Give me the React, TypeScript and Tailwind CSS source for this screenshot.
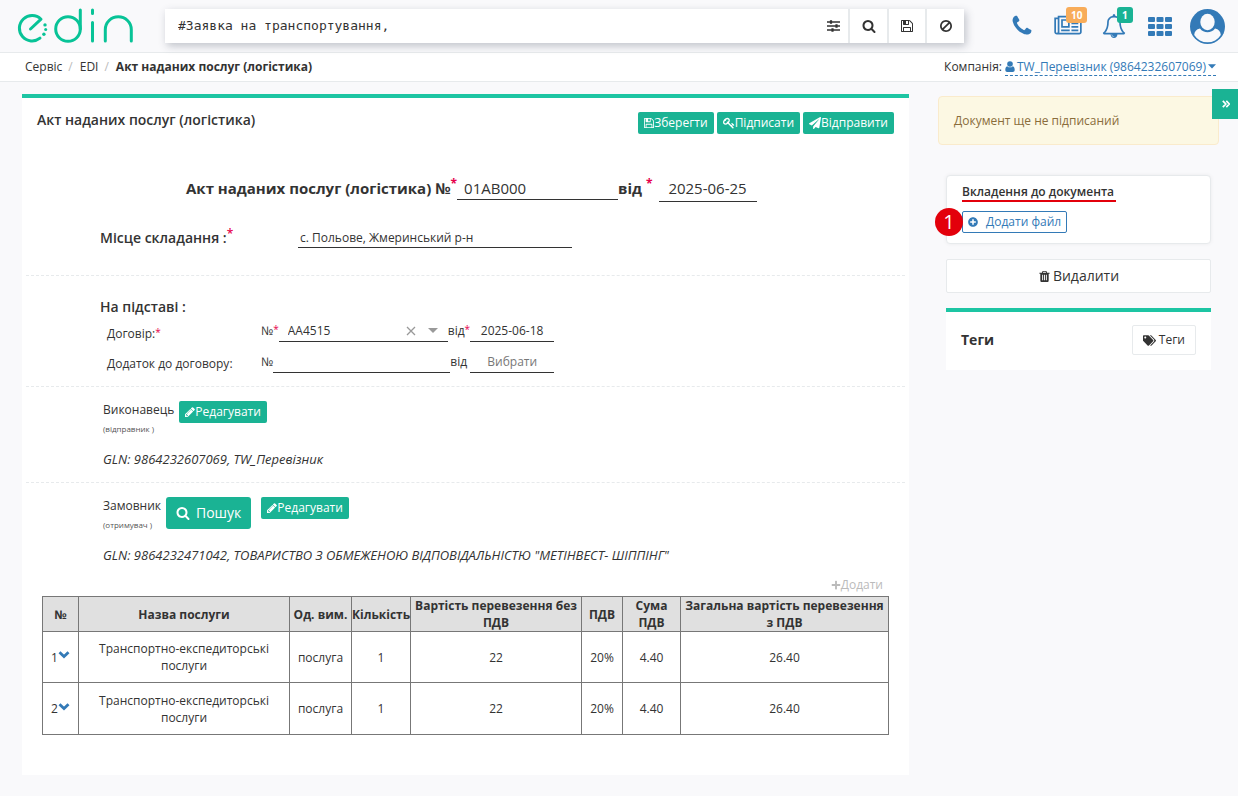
import React from "react";
import { FaPaperPlane, FaPlus, FaPlusCircle, FaTags } from "react-icons/fa";

type GlyphProps = { d: string; box?: string; className?: string };

function Glyph({ d, box = "0 0 1792 1792", className = "" }: GlyphProps) {
  return (
    <svg viewBox={box} className={className} fill="currentColor" aria-hidden="true">
      <path d={d} />
    </svg>
  );
}

const PHONE =
  "M1600 1240q0 27-10 70.5t-21 68.5q-21 50-122 106-94 51-186 51-27 0-52.5-3.5t-57.5-12.5-47.5-14.5-55.5-20.5-49-18q-98-35-175-83-128-79-264.5-215.5t-215.5-264.5q-48-77-83-175-3-9-18-49t-20.5-55.5-14.5-47.5-12.5-57.5-3.5-52.5q0-92 51-186 56-101 106-122 25-11 68.5-21t70.5-10q14 0 21 3 18 6 53 76 11 19 30 54t35 63.500 31 53.500q3 4 17.500 25t21.500 35.500 7 28.500q0 20-28.500 50t-62 55-62 53-28.500 46q0 9 5 22.500t8.500 20.500 14 24 11.500 19q76 137 174 235t235 174q2 1 19 11.500t24 14 20.500 8.500 22.500 5q18 0 46-28.500t53-62 55-62 50-28.500q14 0 28.500 7t35.500 21.500 25 17.500q25 15 53.500 31t63.500 35 54 30q70 35 76 53 3 7 3 21z";
const NEWS =
  "M1024 512h-384v384h384v-384zm128 640v128h-640v-128h640zm0-768v640h-640v-640h640zm640 768v128h-512v-128h512zm0-256v128h-512v-128h512zm0-256v128h-512v-128h512zm0-256v128h-512v-128h512zm-1536 960v-960h-128v960q0 26 19 45t45 19 45-19 19-45zm1664 0v-1088h-1536v1088q0 33-11 64h1483q26 0 45-19t19-45zm128-1216v1216q0 80-56 136t-136 56h-1664q-80 0-136-56t-56-136v-1088h256v-128h1792z";
const BELL =
  "M912 1696q0-16-16-16-59 0-101.5-42.5t-42.5-101.5q0-16-16-16t-16 16q0 73 51.5 124.5t124.5 51.5q16 0 16-16zm-666-288h1300q-266-300-266-832 0-51-24-105t-69-103-121.5-80.5-169.5-31.5-169.5 31.5-121.5 80.5-69 103-24 105q0 532-266 832zm1482 0q0 52-38 90t-90 38h-448q0 106-75 181t-181 75-181-75-75-181h-448q-52 0-90-38t-38-90q50-42 91-88t85-119.5 74.5-158.5 50-206 19.5-260q0-152 117-282.5t307-158.5q-8-19-8-39 0-40 28-68t68-28 68 28 28 68q0 20-8 39 190 28 307 158.5t117 282.5q0 139 19.5 260t50 206 74.5 158.5 85 119.5 91 88z";
const SAVE =
  "M512 1536h768v-384h-768v384zm896 0h128v-896q0-14-10-38.5t-20-34.5l-281-281q-10-10-34-20t-39-10v416q0 40-28 68t-68 28h-576q-40 0-68-28t-28-68v-416h-128v1280h128v-416q0-40 28-68t68-28h832q40 0 68 28t28 68v416zm-384-928v-320q0-13-9.5-22.5t-22.5-9.5h-192q-13 0-22.5 9.5t-9.5 22.5v320q0 13 9.5 22.5t22.5 9.5h192q13 0 22.5-9.5t9.5-22.5zm640 32v928q0 40-28 68t-68 28h-1344q-40 0-68-28t-28-68v-1344q0-40 28-68t68-28h928q40 0 88 20t76 48l280 280q28 28 48 76t20 88z";
const SEARCH =
  "M1216 832q0-185-131.5-316.5t-316.5-131.5-316.5 131.5-131.5 316.5 131.5 316.5 316.5 131.5 316.5-131.5 131.5-316.5zm512 832q0 52-38 90t-90 38q-54 0-90-38l-343-342q-179 124-399 124-143 0-273.5-55.5t-225-150-150-225-55.5-273.5 55.5-273.5 150-225 225-150 273.5-55.5 273.5 55.5 225 150 150 225 55.5 273.5q0 220-124 399l343 343q37 37 37 90z";
const BAN =
  "M1440 893q0-161-87-295l-754 753q137 89 297 89 111 0 211.5-43.5t173.5-116.5 116-174.5 43-212.5zm-999 299l755-754q-135-91-300-91-148 0-273 73t-198 199-73 274q0 162 89 299zm1223-299q0 157-61 300t-163.5 246-245 164-298.5 61-298.5-61-245-164-163.5-246-61-300 61-299.5 163.5-245.5 245-164 298.5-61 298.5 61 245 164 163.5 245.5 61 299.5z";
const TRASH =
  "M704 1376v-704q0-14-9-23t-23-9h-64q-14 0-23 9t-9 23v704q0 14 9 23t23 9h64q14 0 23-9t9-23zm256 0v-704q0-14-9-23t-23-9h-64q-14 0-23 9t-9 23v704q0 14 9 23t23 9h64q14 0 23-9t9-23zm256 0v-704q0-14-9-23t-23-9h-64q-14 0-23 9t-9 23v704q0 14 9 23t23 9h64q14 0 23-9t9-23zm-544-992h448l-48-117q-7-9-17-11h-317q-10 2-17 11zm928 32v64q0 14-9 23t-23 9h-96v948q0 83-47 143.5t-113 60.5h-832q-66 0-113-58.5t-47-141.5v-952h-96q-14 0-23-9t-9-23v-64q0-14 9-23t23-9h309l70-167q15-37 54-63t79-26h320q40 0 79 26t54 63l70 167h309q14 0 23 9t9 23z";
const KEY =
  "M832 512q0-80-56-136t-136-56-136 56-56 136q0 42 19 83-41-19-83-19-80 0-136 56t-56 136 56 136 136 56 136-56 56-136q0-42-19-83 41 19 83 19 80 0 136-56t56-136zm851 704q0 17-49 66t-66 49q-9 0-28.500-16t-36.500-33-38.500-40-24.500-26l-96 96 220 220q28 28 28 68 0 42-39 81t-81 39q-40 0-68-28l-671-671q-176 131-365 131-163 0-265.500-102.500t-102.500-265.500q0-160 95-313t248-248 313-95q163 0 265.500 102.500t102.500 265.500q0 189-131 365l355 355 96-96q-3-3-26-24.500t-40-38.500-33-36.500-16-28.500q0-17 49-66t66-49q13 0 23 10 6 6 46 44.500t82 79.500 86.500 86 73 78 28.500 41z";
const PENCIL =
  "M491 1536l91-91-235-235-91 91v107h128v128h107zm523-928q0-22-22-22-10 0-17 7l-542 542q-7 7-7 17 0 22 22 22 10 0 17-7l542-542q7-7 7-17zm-54-192l416 416-832 832h-416v-416zm683 96q0 53-37 90l-166 166-416-416 166-165q36-38 90-38 53 0 91 38l235 234q37 39 37 91z";

function Logo() {
  return (
    <svg viewBox="0 0 118 36" className="h-9 w-[118px]" fill="none" stroke="#08c397" strokeWidth="3" strokeLinecap="round" strokeLinejoin="round" role="img" aria-label="edin">
      <path d="M14.500 21 25 11.200A12.700 12.700 0 1 0 24 30.200" />
      <circle cx="52" cy="21" r="12.300" />
      <path d="M64.300 2v19M76.500 14.500v18.500M76.500 2v3.500M89.300 33V21.500a13 12.800 0 0 1 26 0V33" />
      <g fill="#08c397" stroke="none">
        <circle cx="29" cy="16.900" r="1.700" />
        <circle cx="29.700" cy="21.600" r="1.500" />
        <circle cx="27.900" cy="26.200" r="1.700" />
      </g>
    </svg>
  );
}

function Star({ small = false }: { small?: boolean }) {
  return <span className={small ? "self-start text-[10px] leading-3 text-[#e6004c]" : "self-start text-xs leading-3 text-[#e6004c]"}>*</span>;
}

const miniButton = "flex h-[22px] items-center rounded-[2px] bg-[#1ab394] px-[6px] text-xs font-medium text-white";
const lineInput = "border-b border-[#333] bg-transparent outline-none placeholder:text-[#777]";

function EditButton() {
  return (
    <button type="button" className={miniButton}>
      <Glyph d={PENCIL} box="128 128 1536 1536" className="size-[10px]" />
      Редагувати
    </button>
  );
}

const rows = [
  { n: 1, name: "Транспортно-експедиторські послуги", unit: "послуга", qty: "1", net: "22", vat: "20%", vatSum: "4.40", total: "26.40" },
  { n: 2, name: "Транспортно-експедиторські послуги", unit: "послуга", qty: "1", net: "22", vat: "20%", vatSum: "4.40", total: "26.40" },
];

function Header() {
  return (
    <header className="flex h-[53px] items-center border-b border-[#e7eaec] pr-[13px] pl-4">
      <a href="#home" className="mr-[31px]">
        <Logo />
      </a>
      <form className="flex h-[34px] flex-1 items-stretch bg-white shadow-[2px_3px_8px_rgba(60,70,90,0.3)]">
        <input aria-label="Пошук документів" defaultValue="#Заявка на транспортування," className="min-w-0 flex-1 bg-transparent px-[13px] font-['DejaVu_Sans_Mono','Liberation_Mono',monospace] text-[13px] text-[#333] outline-none" />
        <button type="button" aria-label="Фільтри" className="flex w-[30px] items-center justify-center">
          <svg viewBox="0 0 13 12" className="h-3 w-[13px]" fill="none" stroke="currentColor" strokeWidth="1.300" aria-hidden="true">
            <path d="M0 2h13M0 6h13M0 10h13" />
            <path d="M4 .3v3.400M9.500 4.300v3.400M5.500 8.300v3.400" strokeWidth="2.200" />
          </svg>
        </button>
        <button type="button" aria-label="Шукати" className="flex w-[39px] items-center justify-center border-l-2 border-[#e7eaec]">
          <Glyph d={SEARCH} className="size-[14px]" />
        </button>
        <button type="button" aria-label="Зберегти пошук" className="flex w-[38px] items-center justify-center border-l-2 border-[#e7eaec]">
          <Glyph d={SAVE} className="size-[14px]" />
        </button>
        <button type="button" aria-label="Очистити" className="flex w-[39px] items-center justify-center border-l-2 border-[#e7eaec]">
          <Glyph d={BAN} className="size-[14px]" />
        </button>
      </form>
      <nav className="ml-[46px] flex items-center text-[#337ab7]">
        <a href="#phone" aria-label="Телефон" className="mr-5">
          <Glyph d={PHONE} className="size-6" />
        </a>
        <a href="#news" aria-label="Новини" className="relative mr-5">
          <Glyph d={NEWS} box="0 0 2048 1792" className="h-6 w-7" />
          <span className="absolute -top-[7px] left-3 rounded-[3px] bg-[#f8ac59] px-[5px] text-[10px] leading-4 font-bold text-white">10</span>
        </a>
        <a href="#alerts" aria-label="Сповіщення" className="relative mr-[22px]">
          <Glyph d={BELL} className="size-6" />
          <span className="absolute -top-[7px] left-[15px] rounded-[3px] bg-[#1ab394] px-[5px] text-[10px] leading-4 font-bold text-white">1</span>
        </a>
        <a href="#apps" aria-label="Сервіси" className="mr-[18px]">
          <svg viewBox="0 0 24 19" className="h-[19px] w-6" fill="currentColor" aria-hidden="true">
            {[0, 7, 14].map((y) => [0, 8.5, 17].map((x) => <rect key={`${x}-${y}`} x={x} y={y} width="7" height="5" rx="1" />))}
          </svg>
        </a>
        <a href="#profile" aria-label="Профіль">
          <svg viewBox="0 0 35 35" className="size-[35px]" aria-hidden="true">
            <circle cx="17.500" cy="17.500" r="17.500" fill="currentColor" />
            <ellipse cx="17.500" cy="13" rx="7.200" ry="8.200" fill="#f9f9fb" />
            <path d="M10 19.500C6.300 20.300 4.500 22.500 4.200 26a15.700 15.700 0 0 0 26.600 0c-.3-3.500-2.100-5.700-5.800-6.500-3.500 5-11.500 5-15 0Z" fill="#f9f9fb" />
          </svg>
        </a>
      </nav>
    </header>
  );
}

export default function App() {
  return (
    <div className="min-h-screen bg-[#f9f9fb] font-['Open_Sans','Noto_Sans',sans-serif] text-xs text-[#333]">
      <Header />
      <div className="flex h-[29px] items-center justify-between border-b border-[#e7eaec] bg-white pr-[22px] pl-[25px]">
        <nav className="flex items-center" aria-label="Навігація">
          <a href="#service">Сервіс</a>
          <span className="px-[6px] text-[#bbb]">/</span>
          <a href="#edi" className="pl-px">EDI</a>
          <span className="px-[6px] text-[#bbb]">/</span>
          <strong className="pl-px font-bold">Акт наданих послуг (логістика)</strong>
        </nav>
        <div className="flex items-center gap-[3px]">
          <span>Компанія:</span>
          <button type="button" className="flex items-center gap-[2px] border-b border-dashed border-[#337ab7] text-[#337ab7]">
            <svg viewBox="0 0 10 11" className="h-[11px] w-[10px]" fill="currentColor" aria-hidden="true">
              <circle cx="5" cy="3" r="2.800" />
              <path d="M2.300 5.200a3.700 3.700 0 0 0 5.400 0C9.400 5.500 9.700 7.500 9.700 9c0 1.200-.8 2-1.900 2H2.200C1.100 11 .3 10.200.3 9c0-1.500.3-3.500 2-3.800Z" />
            </svg>
            TW_Перевізник (9864232607069)
            <svg viewBox="0 0 8 5" className="h-[5px] w-2" fill="currentColor" aria-hidden="true">
              <path d="M0 .3h8L4 4.500z" />
            </svg>
          </button>
        </div>
      </div>

      <div className="flex items-start pt-3 pl-[22px]">
        <main className="min-w-0 flex-1 border-t-4 border-[#1dc5a3] bg-white px-1 pb-10">
          <div className="flex items-start justify-between px-[11px] pt-[14px]">
            <h1 className="text-sm leading-4 font-semibold">Акт наданих послуг (логістика)</h1>
            <div className="flex gap-[3px]">
              <button type="button" className={miniButton}>
                <Glyph d={SAVE} box="128 128 1536 1536" className="size-[10px]" />
                Зберегти
              </button>
              <button type="button" className={miniButton}>
                <Glyph d={KEY} className="size-3" />
                Підписати
              </button>
              <button type="button" className={miniButton}>
                <FaPaperPlane className="size-3" />
                Відправити
              </button>
            </div>
          </div>

          <div className="mt-[41px] flex h-[26px] items-center pl-[160px] text-[15px]">
            <label htmlFor="act-number" className="flex font-bold">
              Акт наданих послуг (логістика) №
              <Star />
            </label>
            <input id="act-number" defaultValue="01AB000" className={`${lineInput} h-6 w-[161px] px-[7px]`} />
            <label htmlFor="act-date" className="flex font-bold">
              від&nbsp;
              <Star />
            </label>
            <input id="act-date" defaultValue="2025-06-25" className={`${lineInput} ml-[6px] h-7 w-[98px] text-center`} />
          </div>

          <div className="mt-[27px] flex h-5 items-center pl-[74px]">
            <label htmlFor="place" className="flex w-[198px] text-sm font-semibold">
              Місце складання :<Star />
            </label>
            <input id="place" defaultValue="с. Польове, Жмеринський р-н" className={`${lineInput} h-5 w-[274px] px-[2px]`} />
          </div>

          <section className="mt-[27px] border-t border-dashed border-[#e7eaec] pt-[21px] pl-[74px]">
            <h2 className="text-sm font-semibold">На підставі :</h2>
            <div className="mt-[3px] flex h-[22px] items-center pl-[7px]">
              <span className="flex w-[154px] pt-[6px]">
                Договір:
                <Star small />
              </span>
              <label htmlFor="contract" className="flex">
                №<Star small />
              </label>
              <div className="flex h-[22px] w-[169px] items-center border-b border-[#333]">
                <input id="contract" defaultValue="АА4515" className="min-w-0 flex-1 bg-transparent pl-[9px] outline-none" />
                <button type="button" aria-label="Очистити договір" className="mr-3 text-[#999]">
                  <svg viewBox="0 0 10 10" className="size-[10px]" fill="none" stroke="currentColor" strokeWidth="1.300" aria-hidden="true">
                    <path d="m1 1 8 8M9 1 1 9" />
                  </svg>
                </button>
                <button type="button" aria-label="Вибрати договір" className="mr-[10px] text-[#999]">
                  <svg viewBox="0 0 10 5" className="h-[5px] w-[10px]" fill="currentColor" aria-hidden="true">
                    <path d="M0 0h10L5 5z" />
                  </svg>
                </button>
              </div>
              <label htmlFor="contract-date" className="flex">
                від
                <Star small />
              </label>
              <input id="contract-date" defaultValue="2025-06-18" className={`${lineInput} h-[22px] w-[84px] text-center`} />
            </div>
            <div className="mt-[9px] flex h-[22px] items-center pl-[7px]">
              <span className="w-[154px] pt-1">Додаток до договору:</span>
              <label htmlFor="annex">№</label>
              <input id="annex" className={`${lineInput} h-[22px] w-[177px]`} />
              <label htmlFor="annex-date" className="w-5">
                від
              </label>
              <input id="annex-date" placeholder="Вибрати" className={`${lineInput} h-[22px] w-[84px] text-center`} />
            </div>
          </section>

          <section className="mt-[13px] border-t border-dashed border-[#e7eaec] pt-[14px] pb-[14px] pl-[77px]">
            <div className="flex h-[37px] items-start gap-[5px]">
              <div>
                <div className="leading-[18px]">Виконавець</div>
                <div className="mt-1 text-[8px] leading-3 text-[#555]">(відправник )</div>
              </div>
              <EditButton />
            </div>
            <p className="mt-[13px] text-[13px] leading-[17px] italic">GLN: 9864232607069, TW_Перевізник</p>
          </section>

          <section className="border-t border-dashed border-[#e7eaec] pt-[14px] pl-[77px]">
            <div className="flex h-[37px] items-start gap-[5px]">
              <div>
                <div className="leading-[18px]">Замовник</div>
                <div className="mt-1 text-[8px] leading-3 text-[#555]">(отримувач )</div>
              </div>
              <button type="button" className="mr-[5px] flex h-8 items-center gap-[6px] rounded-[3px] bg-[#1ab394] px-[10px] text-sm text-white">
                <Glyph d={SEARCH} className="size-[14px]" />
                Пошук
              </button>
              <EditButton />
            </div>
            <p className="mt-[13px] text-[13px] leading-[17px] italic">GLN: 9864232471042, ТОВАРИСТВО З ОБМЕЖЕНОЮ ВІДПОВІДАЛЬНІСТЮ "МЕТІНВЕСТ- ШІППІНГ"</p>
          </section>

          <div className="mt-3 pr-4 pl-4">
            <div className="flex justify-end pr-[6px]">
              <button type="button" className="flex h-[18px] items-center text-[#bbb]">
                <FaPlus className="size-[10px]" />
                Додати
              </button>
            </div>
            <table className="mt-[2px] w-full table-fixed border-collapse text-center [&_td]:border [&_td]:border-[#777] [&_th]:border [&_th]:border-[#777]">
              <colgroup>
                <col className="w-9" />
                <col />
                <col className="w-[62px]" />
                <col className="w-[59px]" />
                <col className="w-[171px]" />
                <col className="w-[41px]" />
                <col className="w-[58px]" />
                <col className="w-[208px]" />
              </colgroup>
              <thead className="bg-[#e0e0e0]">
                <tr className="h-[35px] leading-[17px]">
                  <th>№</th>
                  <th>Назва послуги</th>
                  <th>Од. вим.</th>
                  <th className="whitespace-nowrap">Кількість</th>
                  <th>Вартість перевезення без ПДВ</th>
                  <th>ПДВ</th>
                  <th>Сума ПДВ</th>
                  <th>Загальна вартість перевезення з ПДВ</th>
                </tr>
              </thead>
              <tbody>
                {rows.map((r) => (
                  <tr key={r.n} className="h-[51px] leading-[17px] last:h-[52px]">
                    <td>
                      <span className="flex items-center justify-center">
                        {r.n}
                        <button type="button" aria-label={`Розгорнути рядок ${r.n}`} className="pb-1 text-[#337ab7]">
                          <svg viewBox="0 0 12 8" className="h-2 w-3" fill="none" stroke="currentColor" strokeWidth="2.800" aria-hidden="true">
                            <path d="m1.500 1.300 4.500 4.200 4.500-4.200" />
                          </svg>
                        </button>
                      </span>
                    </td>
                    <td className="px-4">{r.name}</td>
                    <td>{r.unit}</td>
                    <td>{r.qty}</td>
                    <td>{r.net}</td>
                    <td>{r.vat}</td>
                    <td>{r.vatSum}</td>
                    <td>{r.total}</td>
                  </tr>
                ))}
              </tbody>
            </table>
          </div>
        </main>

        <aside className="relative w-[329px] shrink-0 pr-[19px] pl-[29px]">
          <button type="button" aria-label="Згорнути панель" className="absolute -top-[5px] right-0 flex h-[30px] w-[26px] items-center justify-center bg-[#1ab394] pl-[2px] text-white">
            <svg viewBox="0 0 8 8" className="size-2" fill="none" stroke="currentColor" strokeWidth="1.700" aria-hidden="true">
              <path d="m.8.8 3 3.200-3 3.200M4.300.8l3 3.200-3 3.200" />
            </svg>
          </button>
          <div className="mt-[2px] rounded-[4px] border border-[#faebcc] bg-[#fcf8e3] px-[15px] pt-[15px] pb-[14px] leading-[18px] text-[#8a6d3b]">Документ ще не підписаний</div>
          <div className="mt-[30px] px-2">
            <section className="relative rounded-[4px] border border-[#e7eaec] bg-white px-[15px] pt-2 pb-[10px] shadow-[0_0_4px_rgba(0,0,0,0.06)]">
              <h2 className="inline-block border-b-2 border-[#e3000b] pr-[2px] leading-4 font-semibold">Вкладення до документа</h2>
              <button type="button" className="mt-[9px] flex h-[22px] items-center gap-2 rounded-[2px] border border-[#337ab7] px-[5px] text-[#337ab7]">
                <FaPlusCircle className="size-[10px]" />
                Додати файл
              </button>
              <span className="absolute top-8 -left-3 flex size-7 items-center justify-center rounded-full bg-[#e3000b] text-xl font-medium text-white">1</span>
            </section>
            <button type="button" className="mt-[15px] flex h-[34px] w-full items-center justify-center gap-[2px] rounded-[2px] border border-[#e7eaec] bg-white text-sm">
              <Glyph d={TRASH} className="size-[13px]" />
              Видалити
            </button>
            <section className="mt-[15px] flex h-[62px] items-center justify-between border-t-4 border-[#1dc5a3] bg-white px-[15px] pb-[2px]">
              <h2 className="text-sm font-bold">Теги</h2>
              <button type="button" className="flex h-[30px] items-center gap-[3px] rounded-[2px] border border-[#e7eaec] px-[10px]">
                <FaTags className="size-[13px]" />
                Теги
              </button>
            </section>
          </div>
        </aside>
      </div>
    </div>
  );
}
